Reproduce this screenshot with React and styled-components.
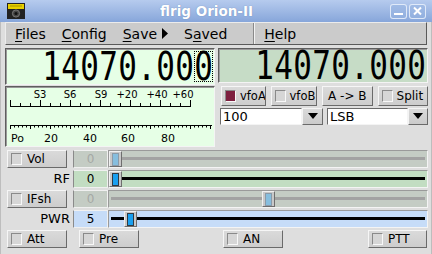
import React from 'react';
import styled, { createGlobalStyle } from 'styled-components';

const Global = createGlobalStyle`
  html, body { margin: 0; padding: 0; background: #dedede; }
  body { font-family: "DejaVu Sans", sans-serif; color: #000; }
  * { box-sizing: border-box; }
`;

const Win = styled.div`
  width: 432px;
  height: 254px;
  display: flex;
  flex-direction: column;
  background: #dedede;
  overflow: hidden;
`;

const TitleBar = styled.div`
  height: 22px;
  flex: none;
  display: flex;
  align-items: center;
  padding: 0 6px 0 7px;
  background: linear-gradient(#b6cbee, #87a6da);
`;

const TitleText = styled.div`
  flex: 1;
  text-align: center;
  color: #fff;
  font-weight: bold;
  font-size: 13.5px;
  text-shadow: 0 0 1px rgba(60, 90, 140, 0.6);
  padding-right: 2px;
`;

const WinBtns = styled.div`
  display: flex;
  gap: 2px;
`;

const WinBtn = styled.div`
  width: 17px;
  height: 15px;
  border: 1px solid rgba(235, 242, 252, 0.85);
  border-radius: 3px;
  display: flex;
  align-items: center;
  justify-content: center;
  background: rgba(150, 180, 225, 0.5);
`;

const Frame = styled.div`
  flex: 1;
  display: flex;
  flex-direction: column;
  padding: 0 4px 4px 4px;
  background: #dedede;
  border-left: 1px solid #bdbdbd;
  border-right: 1px solid #bdbdbd;
`;

const MenuBar = styled.div`
  height: 23px;
  flex: none;
  display: flex;
  align-items: center;
  padding-left: 1px;
  background: #cbcbcb;
  border: 1px solid;
  border-color: #ececec #5a5a5a #5a5a5a #ececec;
  font-size: 14px;
`;

const MenuItem = styled.div`
  padding: 0 8px;
  display: flex;
  align-items: center;
  gap: 5px;
  u { text-decoration: underline; text-underline-offset: 2px; }
`;

const MenuSep = styled.div`
  width: 2px;
  height: 21px;
  margin-left: 18px;
  margin-right: 1px;
  border-left: 1px solid #8a8a8a;
  border-right: 1px solid #f2f2f2;
`;

const Top = styled.div`
  margin-top: 3px;
  display: grid;
  grid-template-columns: 210px 210px;
  column-gap: 3px;
`;

const Col = styled.div`
  display: flex;
  flex-direction: column;
`;

const FreqBox = styled.div`
  height: ${p => p.$h}px;
  background: ${p => p.$bg};
  border: 1px solid;
  border-color: #5e5e5e #f4f4f4 #f4f4f4 #5e5e5e;
  box-shadow: inset 1px 1px 0 #9a9a9a;
  display: flex;
  justify-content: flex-end;
  align-items: center;
  padding-right: ${p => p.$pr}px;
  font-family: "DejaVu Sans Mono", monospace;
  font-size: 31px;
`;

const Cell = styled.div`
  width: 19px;
  height: 31px;
  display: flex;
  align-items: center;
  justify-content: center;
  outline: ${p => (p.$focus ? '1px dotted #000' : 'none')};
  outline-offset: -1px;
  span { display: inline-block; line-height: 0.8; transform: scaleY(1.24); }
`;

const MeterBox = styled.div`
  margin-top: 1px;
  height: 61px;
  background: #e6ffe6;
  border: 1px solid;
  border-color: #5e5e5e #f4f4f4 #f4f4f4 #5e5e5e;
  box-shadow: inset 1px 1px 0 #9a9a9a;
  svg { display: block; }
`;

const BtnRow = styled.div`
  margin-top: 3px;
  height: 20px;
  display: flex;
  padding-left: 3px;
  gap: 5px;
`;

const Btn = styled.div`
  width: ${p => p.$w}px;
  height: ${p => p.$h || 20}px;
  display: flex;
  align-items: center;
  justify-content: ${p => (p.$center ? 'center' : 'flex-start')};
  gap: ${p => (p.$tight ? 4 : 5)}px;
  padding-left: ${p => (p.$center ? 0 : 3)}px;
  font-size: ${p => (p.$small ? 11.5 : 12)}px;
  background: linear-gradient(#dadada, #cdcdcd);
  border: 1px solid;
  border-color: #f6f6f6 #6a6a6a #6a6a6a #f6f6f6;
  white-space: nowrap;
  overflow: hidden;
`;

const Led = styled.div`
  width: 11px;
  height: 12px;
  flex: none;
  background: ${p => (p.$on ? '#7e2040' : '#d6d6d6')};
  border: 1px solid;
  border-color: #8a8a8a #f8f8f8 #f8f8f8 #8a8a8a;
`;

const SelRow = styled.div`
  margin-top: 2px;
  height: 17px;
  display: flex;
  padding-left: 2px;
`;

const SelInput = styled.div`
  width: ${p => p.$w}px;
  height: 17px;
  background: #fff;
  border: 1px solid;
  border-color: #6a6a6a #f4f4f4 #f4f4f4 #6a6a6a;
  font-size: 13px;
  padding-left: 2px;
  display: flex;
  align-items: center;
`;

const SelArrow = styled.div`
  width: ${p => p.$w}px;
  height: 17px;
  margin-right: ${p => p.$mr || 0}px;
  background: linear-gradient(#dadada, #cbcbcb);
  border: 1px solid;
  border-color: #f4f4f4 #6a6a6a #6a6a6a #f4f4f4;
  display: flex;
  align-items: center;
  justify-content: center;
`;

const Rows = styled.div`
  margin-top: 3px;
  display: flex;
  flex-direction: column;
  gap: 2px;
  padding-left: 2px;
`;

const Row = styled.div`
  height: 18px;
  display: grid;
  grid-template-columns: 66px 35px 320px;
`;

const Label = styled.div`
  font-size: 13px;
  text-align: right;
  padding-right: 3px;
  line-height: 18px;
`;

const ValueBox = styled.div`
  height: 18px;
  background: ${p => p.$bg};
  color: ${p => (p.$dis ? '#a4a8a4' : '#000')};
  border: 1px solid;
  border-color: #f0f0f0 #f0f0f0 #f0f0f0 #8a8a8a;
  font-size: 12px;
  display: flex;
  align-items: center;
  justify-content: center;
`;

const Slider = styled.div`
  position: relative;
  height: 18px;
  background: ${p => p.$bg};
  border: 1px solid;
  border-color: #9a9a9a #f4f4f4 #f4f4f4 #9a9a9a;
`;

const Track = styled.div`
  position: absolute;
  left: 2px;
  right: 2px;
  top: 6px;
  height: 3px;
  background: ${p => (p.$dis ? '#a2a2a2' : '#000')};
`;

const Thumb = styled.div`
  position: absolute;
  top: 0;
  left: ${p => p.$x}px;
  width: 13px;
  height: 16px;
  background: #c8c8c8;
  border: 1px solid;
  border-color: #f0f0f0 #6e6e6e #6e6e6e #f0f0f0;
  display: flex;
  align-items: center;
  justify-content: center;
  &::after {
    content: '';
    width: 5px;
    height: 11px;
    background: ${p => (p.$dis ? '#86bede' : '#1aa0f0')};
    border: 1px solid ${p => (p.$dis ? '#8a9aa8' : '#303a44')};
  }
`;

const BottomRow = styled.div`
  height: 18px;
  display: grid;
  grid-template-columns: 72px 144px 145px 59px;
`;

const Icon = () => (
  <svg width="18" height="16" viewBox="0 0 18 16">
    <rect x="0" y="0" width="18" height="16" fill="#222" />
    <rect x="1" y="1" width="16" height="5" fill="#e8d000" />
    <line x1="3" y1="3" x2="15" y2="3" stroke="#7a6a00" strokeWidth="0.6" />
    <circle cx="9" cy="10.5" r="3.6" fill="#444" stroke="#888" strokeWidth="0.8" />
    <circle cx="9" cy="10.5" r="1.5" fill="#111" />
  </svg>
);

const Freq = ({ value, h, bg, pr, focus }) => (
  <FreqBox $h={h} $bg={bg} $pr={pr}>
    {value.split('').map((c, i, a) => (
      <Cell key={i} $focus={focus && i === a.length - 1}>
        <span>{c}</span>
      </Cell>
    ))}
  </FreqBox>
);

const Meter = () => {
  const sTicks = [];
  for (let x = 4; x <= 184; x += 10) {
    const tall = (x - 4) % 30 === 0;
    sTicks.push(<line key={x} x1={x + 0.5} y1={tall ? 13 : 16} x2={x + 0.5} y2={19} stroke="#000" />);
  }
  const pTicks = [];
  for (let x = 4; x <= 205; x += 4) {
    const tall = (x - 4) % 20 === 0;
    pTicks.push(<line key={x} x1={x + 0.5} y1={38} x2={x + 0.5} y2={tall ? 42 : 40.5} stroke="#000" />);
  }
  const sLabels = [['S3', 34], ['S6', 64], ['S9', 95], ['+20', 121], ['+40', 151], ['+60', 177]];
  const pLabels = [['20', 45], ['40', 84], ['60', 122], ['80', 162]];
  return (
    <svg width="208" height="59" viewBox="0 0 208 59">
      <g fontFamily="DejaVu Sans, sans-serif" fontSize="10" textAnchor="middle">
        {sLabels.map(([t, x]) => (
          <text key={t} x={x} y={11}>{t}</text>
        ))}
      </g>
      <line x1="4" y1="19.5" x2="185" y2="19.5" stroke="#000" />
      {sTicks}
      <line x1="4" y1="38.5" x2="206" y2="38.5" stroke="#000" />
      {pTicks}
      <g fontFamily="DejaVu Sans, sans-serif" fontSize="11" textAnchor="middle">
        <text x="5" y="55" textAnchor="start">Po</text>
        {pLabels.map(([t, x]) => (
          <text key={t} x={x} y={55}>{t}</text>
        ))}
      </g>
    </svg>
  );
};

const Arrow = () => (
  <svg width="10" height="7" viewBox="0 0 10 7">
    <path d="M0 0 H10 L5 6 Z" fill="#000" />
  </svg>
);

const LightBtn = ({ w, label, on }) => (
  <Btn $w={w} $h={18}>
    <Led $on={on} />
    <span>{label}</span>
  </Btn>
);

const ControlRow = ({ label, btn, value, bg, dis, thumb }) => (
  <Row>
    {btn ? (
      <div>
        <LightBtn w={60} label={label} />
      </div>
    ) : (
      <Label>{label}</Label>
    )}
    <ValueBox $bg={bg} $dis={dis}>{value}</ValueBox>
    <Slider $bg={bg}>
      <Track $dis={dis} />
      <Thumb $x={thumb} $dis={dis} />
    </Slider>
  </Row>
);

export default function App() {
  return (
    <>
      <Global />
      <Win>
        <TitleBar>
          <Icon />
          <TitleText>flrig Orion-II</TitleText>
          <WinBtns>
            <WinBtn>
              <svg width="11" height="9" viewBox="0 0 11 9">
                <rect x="1" y="6" width="9" height="2" fill="#fff" />
              </svg>
            </WinBtn>
            <WinBtn>
              <svg width="11" height="10" viewBox="0 0 11 10">
                <path d="M2 1.5 L9 8.5 M9 1.5 L2 8.5" stroke="#fff" strokeWidth="2" />
              </svg>
            </WinBtn>
          </WinBtns>
        </TitleBar>
        <Frame>
          <MenuBar>
            <MenuItem><span><u>F</u>iles</span></MenuItem>
            <MenuItem><span><u>C</u>onfig</span></MenuItem>
            <MenuItem>
              <span><u>S</u>ave</span>
              <svg width="6" height="11" viewBox="0 0 6 11"><path d="M0 0 L6 5.5 L0 11 Z" fill="#000" /></svg>
            </MenuItem>
            <MenuItem><span>S<u>a</u>ved</span></MenuItem>
            <MenuSep />
            <MenuItem><span><u>H</u>elp</span></MenuItem>
          </MenuBar>
          <Top>
            <Col>
              <Freq value="14070.000" h={37} bg="#e6ffe6" pr={1} focus />
              <MeterBox>
                <Meter />
              </MeterBox>
            </Col>
            <Col>
              <Freq value="14070.000" h={35} bg="#c6dcc6" pr={1} />
              <BtnRow>
                <Btn $w={45} $small $tight><Led $on /><span>vfoA</span></Btn>
                <Btn $w={47} $small $tight><Led /><span>vfoB</span></Btn>
                <Btn $w={51} $center><span>A -&gt; B</span></Btn>
                <Btn $w={51} $tight><Led /><span>Split</span></Btn>
              </BtnRow>
              <SelRow>
                <SelInput $w={82}>100</SelInput>
                <SelArrow $w={21} $mr={4}><Arrow /></SelArrow>
                <SelInput $w={81}>LSB</SelInput>
                <SelArrow $w={20}><Arrow /></SelArrow>
              </SelRow>
            </Col>
          </Top>
          <Rows>
            <ControlRow label="Vol" btn value="0" bg="#c4ccc4" dis thumb={0} />
            <ControlRow label="RF" value="0" bg="#c2ddc2" thumb={0} />
            <ControlRow label="IFsh" btn value="0" bg="#c4ccc4" dis thumb={153} />
            <ControlRow label="PWR" value="5" bg="#c6dcf8" thumb={15} />
            <BottomRow>
              <LightBtn w={60} label="Att" />
              <LightBtn w={60} label="Pre" />
              <LightBtn w={60} label="AN" />
              <LightBtn w={59} label="PTT" />
            </BottomRow>
          </Rows>
        </Frame>
      </Win>
    </>
  );
}
